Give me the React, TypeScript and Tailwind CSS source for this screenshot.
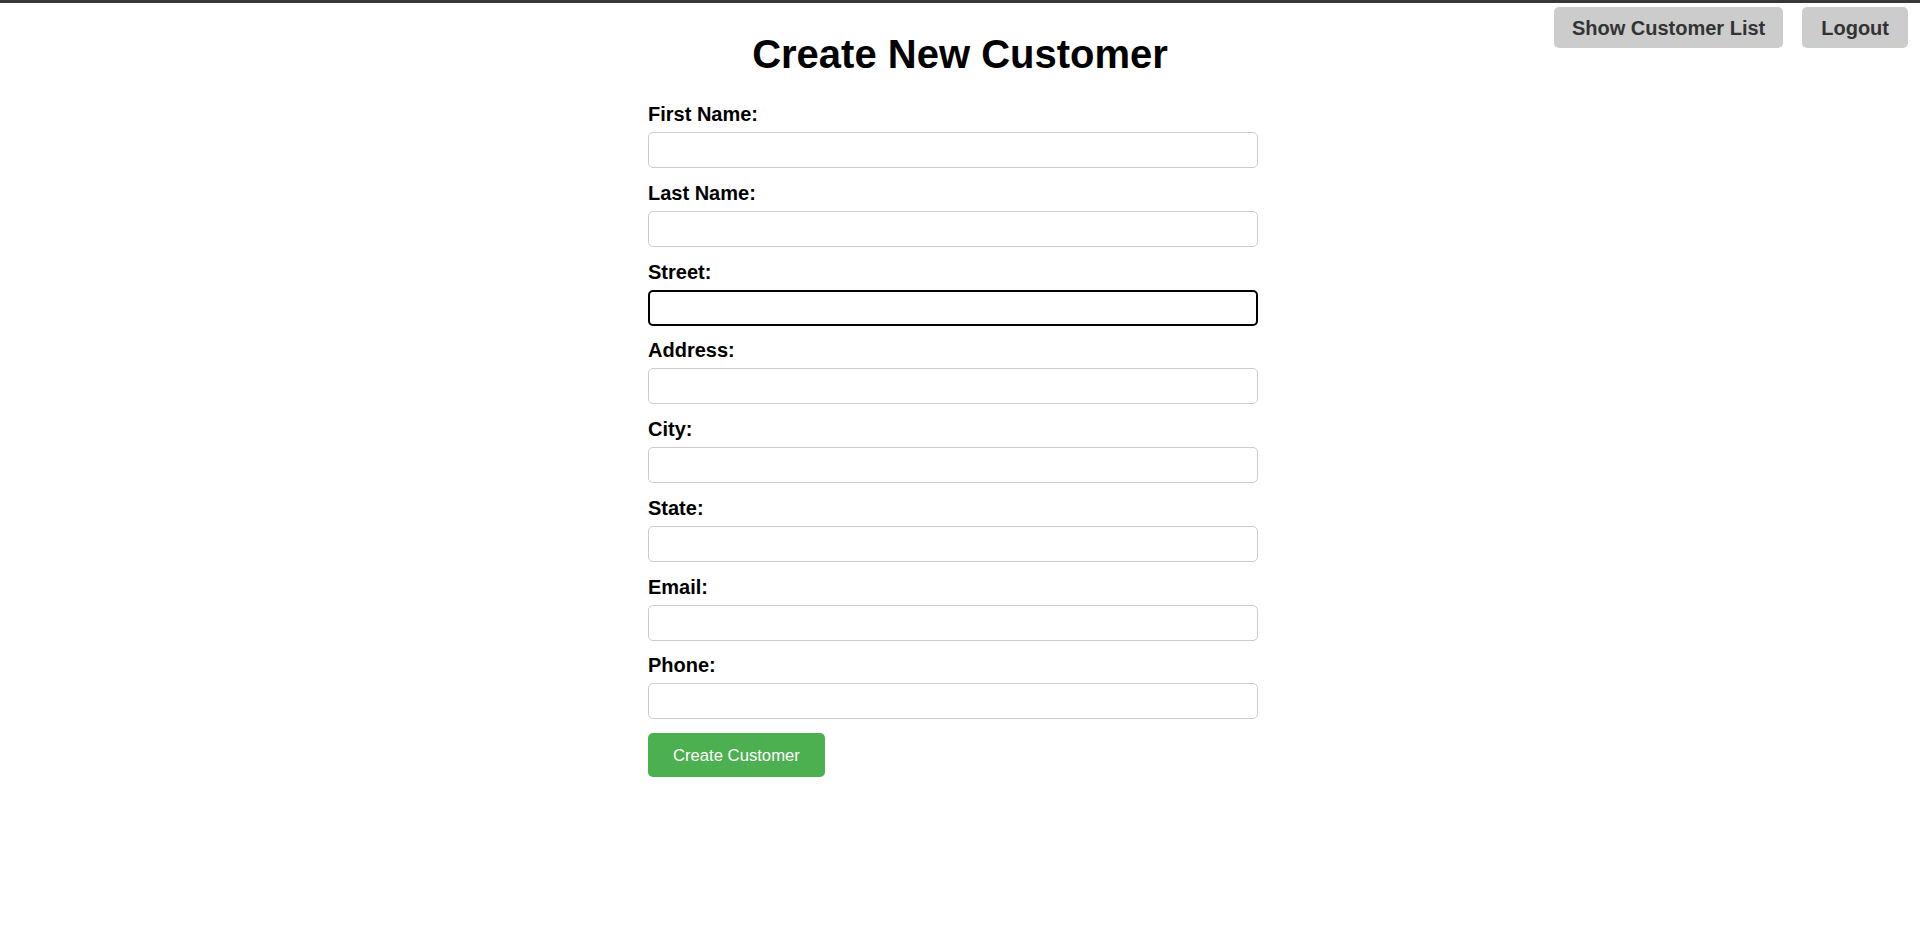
import { useState } from 'react';

const fields = [
  { id: 'firstName', label: 'First Name:' },
  { id: 'lastName', label: 'Last Name:' },
  { id: 'street', label: 'Street:' },
  { id: 'address', label: 'Address:' },
  { id: 'city', label: 'City:' },
  { id: 'state', label: 'State:' },
  { id: 'email', label: 'Email:' },
  { id: 'phone', label: 'Phone:' },
];

const App = () => {
  const [values, setValues] = useState<Record<string, string>>({});
  const [focused, setFocused] = useState('street');

  return (
    <div className="relative min-h-screen w-full bg-white font-['Liberation_Sans',Arial,sans-serif] text-black">
      {/* top strip */}
      <div className="h-[3px] w-full bg-[#383838]"></div>

      {/* nav buttons */}
      <div className="absolute right-[12px] top-[7px] flex gap-[19px]">
        <button className="h-[41px] rounded-[5px] bg-[#cccccc] px-[18px] text-[20px] font-bold text-[#333333]">
          Show Customer List
        </button>
        <button className="h-[41px] rounded-[5px] bg-[#cccccc] px-[19px] text-[20px] font-bold text-[#333333]">
          Logout
        </button>
      </div>

      <div className="mx-auto w-[624px] pt-[28px]">
        <h1 className="text-center text-[40px] font-bold leading-[46px]">Create New Customer</h1>

        <form className="mt-[26px]" onSubmit={(e) => e.preventDefault()}>
          {fields.map((f) => (
            <div key={f.id} className="mb-[13.75px]">
              <label htmlFor={f.id} className="block text-[20px] font-bold leading-[23px]">
                {f.label}
              </label>
              <input
                id={f.id}
                value={values[f.id] || ''}
                onChange={(e) => setValues({ ...values, [f.id]: e.target.value })}
                onFocus={() => setFocused(f.id)}
                className={
                  focused === f.id
                    ? 'mt-[6px] block h-[36px] w-[610px] rounded-[5px] border-2 border-black px-[10px] text-[16px] outline-none'
                    : 'mt-[6px] block h-[36px] w-[610px] rounded-[5px] border border-[#cccccc] px-[10px] text-[16px] outline-none'
                }
              />
            </div>
          ))}
          <button
            type="submit"
            className="h-[44px] rounded-[5px] bg-[#4caf50] px-[25px] text-[16.67px] text-white"
          >
            Create Customer
          </button>
        </form>
      </div>
    </div>
  );
};

export default App;
